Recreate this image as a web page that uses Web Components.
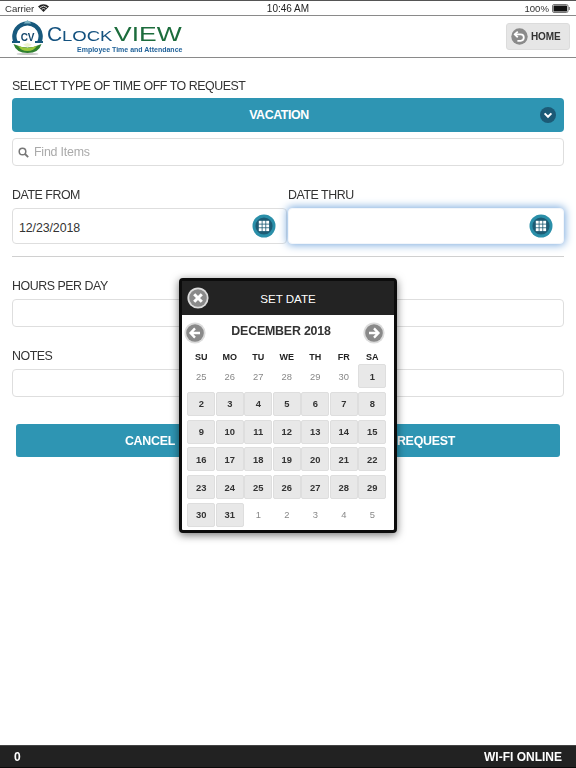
<!DOCTYPE html>
<html><head><meta charset="utf-8">
<style>
html,body{margin:0;padding:0;background:#fff}
body{font-family:"Liberation Sans",Arial,sans-serif;width:576px;height:768px;overflow:hidden}
</style></head><body>
<tv-app></tv-app>
<script>
const comp=(name,css,html)=>{
  customElements.define(name,class extends HTMLElement{
    constructor(){super();const s=this.attachShadow({mode:'open'});s.innerHTML='<style>'+css+'</style>'+html;}
  });
};
const calIcon=`<svg width="24" height="24" viewBox="0 0 24 24"><circle cx="12" cy="12" r="11.5" fill="#2a8fa9"/><circle cx="12" cy="12" r="8.6" fill="#1d5b74"/><g fill="#fff"><rect x="6.8" y="6.8" width="2.9" height="2.9"/><rect x="10.5" y="6.8" width="2.9" height="2.9"/><rect x="14.2" y="6.8" width="2.9" height="2.9"/><rect x="6.8" y="10.5" width="2.9" height="2.9"/><rect x="10.5" y="10.5" width="2.9" height="2.9"/><rect x="14.2" y="10.5" width="2.9" height="2.9"/><rect x="6.8" y="14.2" width="2.9" height="2.9"/><rect x="10.5" y="14.2" width="2.9" height="2.9"/><rect x="14.2" y="14.2" width="2.9" height="2.9"/></g></svg>`;

comp('tv-status',`:host{display:flex;align-items:center;justify-content:space-between;box-sizing:border-box;height:16px;border-top:1px solid #555;border-bottom:1px solid #8a8a8a;padding:0 6px 0 5px;font-size:9.6px;color:#333;position:relative}
.l{display:flex;align-items:center;gap:4px}.r{display:flex;align-items:center;gap:3px}
.t{position:absolute;left:0;right:0;text-align:center;font-size:10px;color:#222}`,
`<div class="l"><span>Carrier</span><svg width="11" height="8" viewBox="0 0 11 8"><path d="M5.5 8 L0 2.4 A8 8 0 0 1 11 2.4Z" fill="#222"/><path d="M2 3.6A5.4 5.4 0 0 1 9 3.6" stroke="#fff" stroke-width=".8" fill="none"/><path d="M3.7 5.2A3 3 0 0 1 7.3 5.2" stroke="#fff" stroke-width=".8" fill="none"/></svg></div><div class="t">10:46 AM</div><div class="r"><span>100%</span><svg width="18" height="9" viewBox="0 0 18 9"><rect x=".5" y=".5" width="15.5" height="8" rx="1.5" fill="#fff" stroke="#777"/><rect x="1.5" y="1.5" width="13.5" height="6" rx=".6" fill="#111"/><rect x="16.6" y="3" width="1.2" height="3" fill="#777"/></svg></div>`);

comp('tv-logo',`:host{display:block;width:176px;height:36px;position:relative;font-family:"Liberation Sans",Arial,sans-serif}
svg{position:absolute;left:0;top:0}
.w{position:absolute;left:35px;top:3px;height:24px;line-height:24px;display:flex;align-items:baseline;white-space:nowrap}
.w b{font-weight:400;font-size:21px;color:#14527f;width:15px}
.w i{font-style:normal;font-size:14.6px;color:#14527f;display:inline-block;width:52px;transform:scaleX(1.27);transform-origin:0 50%}
.w em{font-style:normal;font-size:21px;color:#1c6c3c;display:inline-block;width:68px;transform:scaleX(1.26);transform-origin:0 50%}
.s{position:absolute;left:65px;top:26px;font-size:7px;font-weight:700;color:#22639a;white-space:nowrap;line-height:9px}
.cv{position:absolute;left:6.5px;top:13px;width:18px;text-align:center;font-size:10px;font-weight:700;color:#14476c;line-height:11px;letter-spacing:-.2px}`,
`<svg width="34" height="36" viewBox="0 0 34 36">
<path d="M1.2 23 A15.3 15.3 0 1 1 29.8 23 L25 23 A11 11 0 1 0 6 23Z" fill="#17597d"/>
<path d="M0 22 L8 22 L8 24 L0 24Z M23 22 L31 22 L31 24 L23 24Z" fill="#17597d"/>
<path d="M15.5 1 L19.5 4.6 L11.5 4.6Z" fill="#7fb6c6"/>
<path d="M1.5 25 Q15.5 32 29.5 25 Q27 34 15.5 34 Q4 34 1.5 25Z" fill="#2f7f2f"/>
<path d="M6 26.8 Q15.5 31 25 26.8 Q22 32 15.5 32 Q9 32 6 26.8Z" fill="#9cc83c"/>
<path d="M11 25.5 L15.5 24 L20 25.5 L15.5 28.5Z" fill="#eef4d0"/>
<ellipse cx="15.5" cy="35" rx="11" ry="1" fill="#c4c4c4"/>
</svg>
<span class="cv">CV</span>
<div class="w"><b>C</b><i>LOCK</i><em>VIEW</em></div>
<div class="s">Employee Time and Attendance</div>`);

comp('tv-home',`:host{display:flex;align-items:center;box-sizing:border-box;width:64px;height:27px;background:#e6e6e6;border:1px solid #dcdcdc;border-radius:3px;padding-left:4px;gap:3px;font-size:10px;letter-spacing:-.1px;font-weight:700;color:#333}`,
`<svg width="17" height="17" viewBox="0 0 17 17"><circle cx="8.5" cy="8.5" r="8.2" fill="#8a8a8a"/><path d="M6.8 3.6 L3.6 6.4 L6.8 9.2" fill="none" stroke="#fff" stroke-width="1.8" stroke-linejoin="round"/><path d="M4.2 6.4 H9.6 A3.2 3.2 0 0 1 9.6 12.8 H6.4" fill="none" stroke="#fff" stroke-width="1.8"/></svg><span>HOME</span>`);

comp('tv-header',`:host{display:flex;align-items:center;justify-content:space-between;box-sizing:border-box;height:42px;border-bottom:1px solid #8a8a8a;padding:0 6px 0 12px}`,
`<tv-logo></tv-logo><tv-home></tv-home>`);

comp('tv-label',`:host{display:block;box-sizing:border-box;height:16px;padding-top:1px;font-size:12.4px;letter-spacing:-.45px;line-height:16px;color:#333;white-space:nowrap}`,`<slot></slot>`);

comp('tv-select',`:host{display:flex;align-items:center;justify-content:center;box-sizing:border-box;height:34px;padding-right:18px;background:#2e95b3;border-radius:4px;color:#fff;font-size:12.4px;letter-spacing:-.4px;font-weight:700;position:relative}
svg{position:absolute;right:8px;top:9px}`,
`<slot></slot><svg width="16" height="16" viewBox="0 0 16 16"><circle cx="8" cy="8" r="8" fill="#1c5a76"/><path d="M4.6 6.4 L8 9.8 L11.4 6.4" fill="none" stroke="#fff" stroke-width="2"/></svg>`);

comp('tv-input',`:host{display:flex;align-items:center;box-sizing:border-box;height:28px;background:#fff;border:1px solid #dedede;border-radius:4px;font-size:12.4px;color:#333;position:relative;padding-left:6px}
:host([tall]){height:36px;padding-top:3px;letter-spacing:-.1px}
:host([focus]){border-color:#f2f6fb;box-shadow:0 0 9px 1px #79a9dd}
:host([search]){color:#aaa;padding-left:5px;gap:5px;letter-spacing:-.2px}
.ic{position:absolute;right:10px;top:4.5px;display:none}
:host([cal]) .ic{display:block}
.se{display:none}
:host([search]) .se{display:block}`,
`<svg class="se" width="11" height="11" viewBox="0 0 11 11"><circle cx="4.5" cy="4.5" r="3.3" fill="none" stroke="#777" stroke-width="1.5"/><path d="M7 7 L10.2 10.2" stroke="#777" stroke-width="1.8"/></svg><slot></slot><span class="ic">${calIcon}</span>`);

comp('tv-button',`:host{display:flex;align-items:center;justify-content:center;height:33px;background:#2e95b3;border-radius:3px;color:#fff;font-size:12.4px;letter-spacing:-.25px;font-weight:700}`,`<slot></slot>`);

const days=[[25,26,27,28,29,30],[1],[2,3,4,5,6,7,8],[9,10,11,12,13,14,15],[16,17,18,19,20,21,22],[23,24,25,26,27,28,29],[30,31],[1,2,3,4,5]];
let cells='';
days[0].forEach(d=>cells+=`<div class="c o">${d}</div>`);
for(let i=1;i<7;i++)days[i].forEach(d=>cells+=`<div class="c">${d}</div>`);
days[7].forEach(d=>cells+=`<div class="c o">${d}</div>`);
const wd=['SU','MO','TU','WE','TH','FR','SA'].map(d=>`<div class="w">${d}</div>`).join('');
const circ=`<circle cx="11" cy="11" r="10.6" fill="#dcdcdc"/><circle cx="11" cy="11" r="8.8" fill="#8a8a8a"/>`;
comp('tv-calendar',`:host{display:block;position:absolute;left:179px;top:278px;width:218px;height:255px;box-sizing:border-box;border:3px solid #0c0c0c;border-radius:4px;background:#fff;box-shadow:0 2px 9px rgba(0,0,0,.55)}
.h{height:34px;background:#232323;color:#fff;font-size:11.6px;display:flex;align-items:center;justify-content:center;position:relative}
.h svg{position:absolute;left:5px;top:6px}
.n{height:35px;display:grid;grid-template-columns:1fr auto 1fr;align-items:center;padding:0 9px 0 2px;font-size:12.4px;letter-spacing:-.2px;font-weight:700;color:#333}
.n span{margin:-3px 3.5px 0 -3.5px}
.n svg:last-child{justify-self:end}
.g{display:grid;grid-template-columns:repeat(7,28.5px);grid-template-rows:14px repeat(6,27.8px);margin-left:5px}
.w{text-align:center;font-size:9px;font-weight:700;color:#222;line-height:14px}
.c{box-sizing:border-box;margin:0 .3px 3.8px;height:24px;background:#e8e8e8;border:1px solid #dedede;border-radius:2px;font-size:9.4px;font-weight:700;color:#333;display:flex;align-items:center;justify-content:center}
.c.o{background:none;border-color:transparent;font-weight:400;color:#888}`,
`<div class="h"><svg width="22" height="22" viewBox="0 0 22 22">${circ}<path d="M7.2 7.2 L14.8 14.8 M14.8 7.2 L7.2 14.8" stroke="#fff" stroke-width="3"/></svg>SET DATE</div>
<div class="n"><svg width="22" height="22" viewBox="0 0 22 22">${circ}<path d="M11 6.4 L6.6 11 L11 15.6 M7 11 H16" fill="none" stroke="#fff" stroke-width="2.4"/></svg><span>DECEMBER 2018</span><svg width="22" height="22" viewBox="0 0 22 22">${circ}<path d="M11 6.4 L15.4 11 L11 15.6 M15 11 H6" fill="none" stroke="#fff" stroke-width="2.4"/></svg></div>
<div class="g">${wd}${cells}</div>`);

comp('tv-footer',`:host{display:flex;align-items:center;justify-content:space-between;box-sizing:border-box;height:23px;background:#222;border-top:1px solid #444;border-bottom:1px solid #0a0a0a;padding:0 14px 0 14px;color:#fff;font-size:12px;font-weight:700}`,`<span>0</span><span>WI-FI ONLINE</span>`);

comp('tv-app',`:host{display:flex;flex-direction:column;width:576px;height:768px;position:relative;overflow:hidden;filter:blur(.35px)}
main{flex:1;padding:19px 12px 0;display:flex;flex-direction:column}
.g5{margin-top:5px}.g6{margin-top:6px}.g20{margin-top:20px}
.two{display:grid;grid-template-columns:275px 1fr;column-gap:1px;row-gap:6px;margin-top:20px}
hr{border:0;height:1px;background:#d0d0d0;margin:12px 0 0}
.btns{display:grid;grid-template-columns:1fr 1fr;gap:8px;margin:27px 4px 0}`,
`<tv-status></tv-status><tv-header></tv-header>
<main>
<tv-label>SELECT TYPE OF TIME OFF TO REQUEST</tv-label>
<tv-select class="g5">VACATION</tv-select>
<tv-input class="g6" search>Find Items</tv-input>
<div class="two"><tv-label>DATE FROM</tv-label><tv-label>DATE THRU</tv-label>
<tv-input tall cal>12/23/2018</tv-input><tv-input tall cal focus></tv-input></div>
<hr>
<tv-label class="g20">HOURS PER DAY</tv-label><tv-input class="g6"></tv-input>
<tv-label class="g20">NOTES</tv-label><tv-input class="g6"></tv-input>
<div class="btns"><tv-button>CANCEL</tv-button><tv-button>REQUEST</tv-button></div>
</main>
<tv-footer></tv-footer><tv-calendar></tv-calendar>`);
</script>
</body></html>
